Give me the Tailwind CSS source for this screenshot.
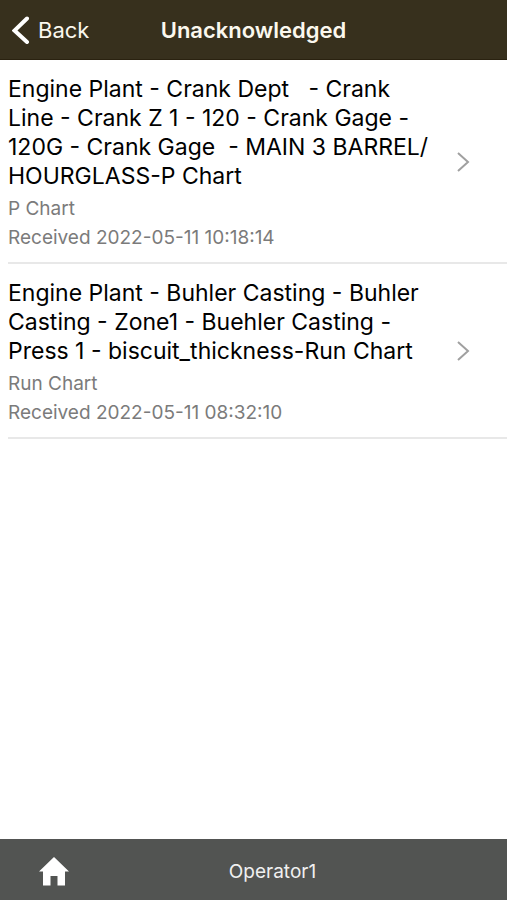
<!DOCTYPE html>
<html lang="en">
<head>
<meta charset="utf-8">
<meta name="viewport" content="width=device-width, initial-scale=1">
<title>Unacknowledged</title>
<script src="https://cdn.jsdelivr.net/npm/@tailwindcss/browser@4"></script>
</head>
<body class="flex min-h-screen flex-col bg-white font-['Inter',sans-serif] text-black">
  <header class="grid h-15 grid-cols-[1fr_auto_1fr] items-center border-b border-[#2a2210] bg-[#37301d] px-3 text-[#fbf8ee]">
    <button type="button" class="flex items-center gap-2 justify-self-start text-[22px] leading-7">
      <svg class="h-7 w-[18px] text-white" viewBox="0 0 18 28" fill="none" stroke="currentColor" stroke-width="4" stroke-linecap="round" aria-hidden="true"><path d="M15 2.500 2.500 14.500 15 26"/></svg>
      Back
    </button>
    <h1 class="text-[22px] leading-7 font-semibold">Unacknowledged</h1>
  </header>
  <main class="flex-1">
    <ul class="pl-2">
      <li class="border-b-2 border-[#e8e8e8]">
        <a href="#p-chart" class="flex items-center pt-[15px] pr-9 pb-[10px]">
          <div class="flex-1">
            <h2 class="text-[23px] leading-[29px] whitespace-pre">Engine Plant - Crank Dept   - Crank
Line - Crank Z 1 - 120 - Crank Gage -
120G - Crank Gage  - MAIN 3 BARREL/
HOURGLASS-P Chart</h2>
            <p class="mt-[3px] text-[19px] leading-[29px] text-[#7b7b7b]">P Chart<br>Received 2022-05-11 10:18:14</p>
          </div>
          <svg class="mb-1 h-5 w-4" viewBox="0 0 16 20" fill="none" stroke="#a0a0a0" stroke-width="2" aria-hidden="true"><path d="m3 1 10 9-10 9"/></svg>
        </a>
      </li>
      <li class="border-b-2 border-[#e8e8e8]">
        <a href="#run-chart" class="flex items-center pt-[15px] pr-9 pb-[10px]">
          <div class="flex-1">
            <h2 class="text-[23px] leading-[29px] whitespace-pre">Engine Plant - Buhler Casting - Buhler
Casting - Zone1 - Buehler Casting -
Press 1 - biscuit_thickness-Run Chart</h2>
            <p class="mt-[3px] text-[19px] leading-[29px] text-[#7b7b7b]">Run Chart<br>Received 2022-05-11 08:32:10</p>
          </div>
          <svg class="mb-1 h-5 w-4" viewBox="0 0 16 20" fill="none" stroke="#a0a0a0" stroke-width="2" aria-hidden="true"><path d="m3 1 10 9-10 9"/></svg>
        </a>
      </li>
    </ul>
  </main>
  <footer class="grid h-[61px] grid-cols-[1fr_auto_1fr] items-center bg-[#525452] pt-[5px] pl-[38px] text-[#f0f0f0]">
    <a href="#home" aria-label="Home" class="justify-self-start text-white">
      <svg class="h-8 w-8" viewBox="0 0 32 32" fill="currentColor" aria-hidden="true"><path d="M16 1 1 15.500h4V29.500h7.500V20h7v9.500H27V15.500h4z"/></svg>
    </a>
    <span class="text-[19px] leading-6">Operator1</span>
  </footer>
</body>
</html>
